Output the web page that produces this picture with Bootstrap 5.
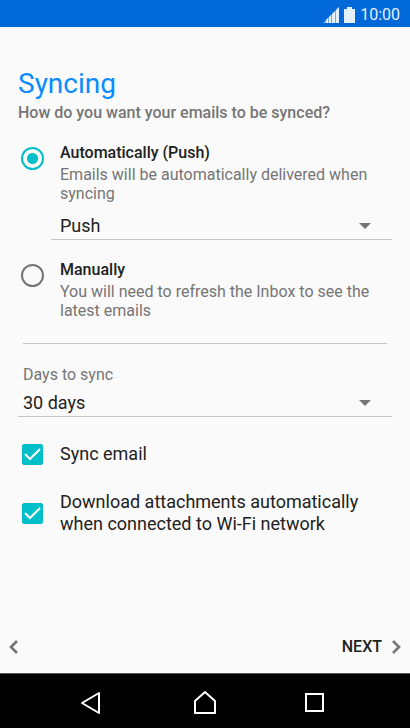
<!DOCTYPE html>
<html lang="en">
<head>
<meta charset="utf-8">
<meta name="viewport" content="width=device-width, initial-scale=1">
<title>Syncing</title>
<link href="https://cdn.jsdelivr.net/npm/bootstrap@5.3.0/dist/css/bootstrap.min.css" rel="stylesheet">
<style>
  body { font-family: Roboto, "Liberation Sans", sans-serif; font-size: 16px; line-height: 19px; color: #212121; background: #fafafa; }
  .status-bar { background: #0068d9; color: #e3effb; height: 27px; padding: 2px 10px 0; gap: 5px; }
  .setup { padding: 40px 18px 0; }
  .setup-title { font-size: 28px; line-height: 34px; font-weight: 400; color: #0a8cff; margin: 0 0 2px; }
  .muted { color: #757575; }
  .strong { font-weight: 500; line-height: 20px; }
  .detail { padding-top: 2px; }
  .option { gap: 14px; }
  .slot { width: 28px; flex: none; }
  .option .form-check-input { display: block; flex: none; margin: 0 auto; box-shadow: none; background-color: transparent; }
  .option .form-check-input[type=radio] { width: 23px; height: 23px; border: 2px solid #757575; margin-top: 4px; }
  .option .form-check-input[type=radio]:checked { border-color: #00bfc8; background-image: radial-gradient(circle, #00bfc8 5px, transparent 6px); }
  .option .form-check-input[type=checkbox] { width: 21px; height: 21px; border-radius: 2px; border-color: #00bfc8; }
  .option .form-check-input[type=checkbox]:checked { background-color: #00bfc8; background-size: 21px 21px; background-image: url("data:image/svg+xml,%3csvg xmlns='http://www.w3.org/2000/svg' viewBox='0 0 21 21'%3e%3cpath d='M3 10l5 5L18 5' fill='none' stroke='%23fff' stroke-width='2'/%3e%3c/svg%3e"); }
  .line-select { font-size: 18px; line-height: 22px; color: #212121; border: 0; border-bottom: 1px solid #c4c4c4; border-radius: 0; height: 27px; padding: 2px 40px 2px 5px; background-color: transparent; background-size: 12px 6px; background-position: right 21px center; background-image: url("data:image/svg+xml,%3csvg xmlns='http://www.w3.org/2000/svg' viewBox='0 0 12 6'%3e%3cpath d='M0 0h12L6 6z' fill='%23757575'/%3e%3c/svg%3e"); }
  .indented { padding-left: 33px; margin: 10px 0 20px; }
  .indented .line-select { padding-left: 9px; }
  .divider { margin: 23px 5px 21px; color: #c4c4c4; opacity: 1; }
  .days-label { padding-left: 5px; margin-bottom: 6px; }
  .checks { font-size: 18px; line-height: 22px; gap: 26px; margin-top: 26px; }
  .pager { padding: 0 9px; height: 53px; }
  .pager button { font-weight: 500; color: #212121; line-height: 20px; gap: 10px; }
  .system-nav { background: #000; height: 55px; border-top: 1px solid #555; padding: 3px 76px 0; }
  svg { display: block; }
</style>
</head>
<body class="d-flex flex-column min-vh-100">
<header class="status-bar d-flex align-items-center justify-content-end">
  <svg width="16" height="16" viewBox="0 0 16 16" fill="currentColor" aria-hidden="true"><path opacity=".5" d="M0 16L16 0v16z"/><path d="M3 16v-3l2-2v5zM6 16v-6l2-2v8zM9 16V7l3-3v12zM13 16V3l3-3v16z"/></svg>
  <svg width="11" height="16" viewBox="0 0 11 16" fill="currentColor" aria-hidden="true"><path d="M3 0h5v2h3v14H0V2h3z"/></svg>
  <span>10:00</span>
</header>

<main class="setup flex-grow-1">
  <h1 class="setup-title">Syncing</h1>
  <p class="muted strong mb-0">How do you want your emails to be synced?</p>

  <form id="sync">
    <div class="option d-flex pt-3 mt-1">
      <div class="slot"><input class="form-check-input" type="radio" name="mode" id="auto" checked></div>
      <label for="auto"><span class="strong d-block">Automatically (Push)</span><span class="muted d-block detail">Emails will be automatically delivered when syncing</span></label>
    </div>
    <div class="indented">
      <select class="form-select line-select shadow-none" aria-label="Delivery"><option>Push</option></select>
    </div>
    <div class="option d-flex">
      <div class="slot"><input class="form-check-input" type="radio" name="mode" id="manual"></div>
      <label for="manual"><span class="strong d-block">Manually</span><span class="muted d-block detail">You will need to refresh the Inbox to see the latest emails</span></label>
    </div>

    <hr class="divider">

    <label class="days-label muted d-block" for="days">Days to sync</label>
    <select class="form-select line-select shadow-none" id="days"><option>30 days</option></select>

    <div class="checks d-flex flex-column">
      <div class="option d-flex align-items-center">
        <div class="slot"><input class="form-check-input" type="checkbox" id="email" checked></div>
        <label for="email">Sync email</label>
      </div>
      <div class="option d-flex align-items-center">
        <div class="slot"><input class="form-check-input" type="checkbox" id="attachments" checked></div>
        <label for="attachments">Download attachments automatically when connected to Wi-Fi network</label>
      </div>
    </div>
  </form>
</main>

<div class="pager d-flex align-items-center justify-content-between">
  <button class="btn p-0 border-0" type="button" aria-label="Back"><svg width="9" height="14" viewBox="0 0 9 14" fill="none" stroke="#757575" stroke-width="2.6"><path d="M8 1L2 7l6 6"/></svg></button>
  <button class="btn p-0 border-0 d-flex align-items-center" type="submit" form="sync">NEXT<svg width="9" height="14" viewBox="0 0 9 14" fill="none" stroke="#757575" stroke-width="2.6" aria-hidden="true"><path d="M1 1l6 6-6 6"/></svg></button>
</div>

<nav class="system-nav d-flex align-items-center justify-content-between" aria-label="System">
  <button class="btn p-0 border-0" type="button" aria-label="Previous"><svg width="30" height="26" viewBox="0 0 30 26" fill="none" stroke="#fff" stroke-width="2" stroke-linejoin="round"><path d="M23 3v20L6 13z"/></svg></button>
  <button class="btn p-0 border-0" type="button" aria-label="Home"><svg width="30" height="26" viewBox="0 0 30 26" fill="none" stroke="#fff" stroke-width="2" stroke-linejoin="round"><path d="M5 23V11l10-9 10 9v12z"/></svg></button>
  <button class="btn p-0 border-0" type="button" aria-label="Recent apps"><svg width="30" height="26" viewBox="0 0 30 26" fill="none" stroke="#fff" stroke-width="2"><path d="M2 4h17v17H2z"/></svg></button>
</nav>
<script src="https://cdn.jsdelivr.net/npm/bootstrap@5.3.0/dist/js/bootstrap.bundle.min.js"></script>
</body>
</html>
